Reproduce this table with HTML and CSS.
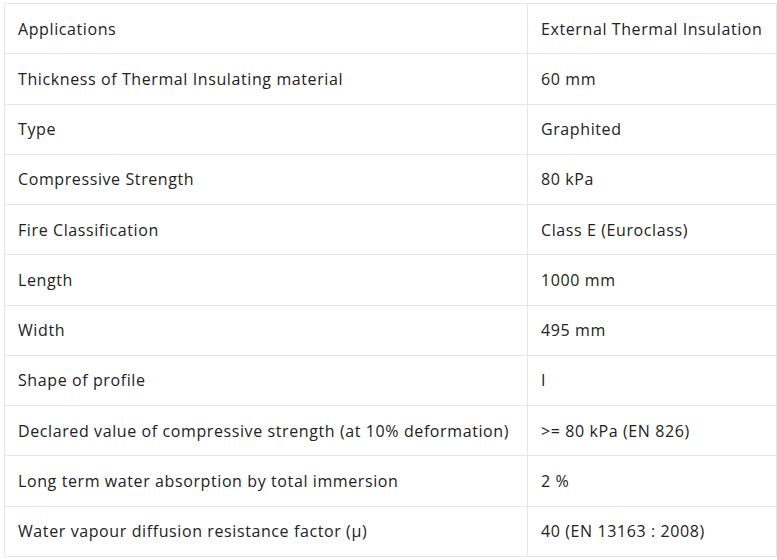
FILE: index.html
```html
<!DOCTYPE html>
<html>
<head>
<meta charset="utf-8">
<link rel="stylesheet" href="styles.css">
</head>
<body>
<table class="spec">
  <colgroup><col class="c-key"><col class="c-val"></colgroup>
  <tr><td>Applications</td><td>External Thermal Insulation</td></tr>
  <tr><td>Thickness of Thermal Insulating material</td><td>60 mm</td></tr>
  <tr><td>Type</td><td>Graphited</td></tr>
  <tr><td>Compressive Strength</td><td>80 kPa</td></tr>
  <tr><td>Fire Classification</td><td>Class E (Euroclass)</td></tr>
  <tr><td>Length</td><td>1000 mm</td></tr>
  <tr><td>Width</td><td>495 mm</td></tr>
  <tr><td>Shape of profile</td><td>I</td></tr>
  <tr><td>Declared value of compressive strength (at 10% deformation)</td><td>&gt;= 80 kPa (EN 826)</td></tr>
  <tr><td>Long term water absorption by total immersion</td><td>2 %</td></tr>
  <tr><td>Water vapour diffusion resistance factor (μ)</td><td>40 (EN 13163 : 2008)</td></tr>
</table>
</body>
</html>
```
FILE: styles.css
```css
html, body {
  margin: 0;
  padding: 0;
  background: #ffffff;
}
body {
  padding: 3px 0 0 4px;
  font-family: "Open Sans", sans-serif;
  font-size: 16px;
  letter-spacing: 0.6px;
  color: #222222;
}
.spec {
  border-collapse: collapse;
  table-layout: fixed;
  width: 772px;
}
.spec .c-key {
  width: 523px;
}
.spec .c-val {
  width: 249px;
}
.spec tr {
  height: 50.27px;
}
.spec td {
  border: 1px solid #e6e6e6;
  padding: 0 13px;
  vertical-align: middle;
  line-height: 20px;
  white-space: nowrap;
  overflow: hidden;
}
```
